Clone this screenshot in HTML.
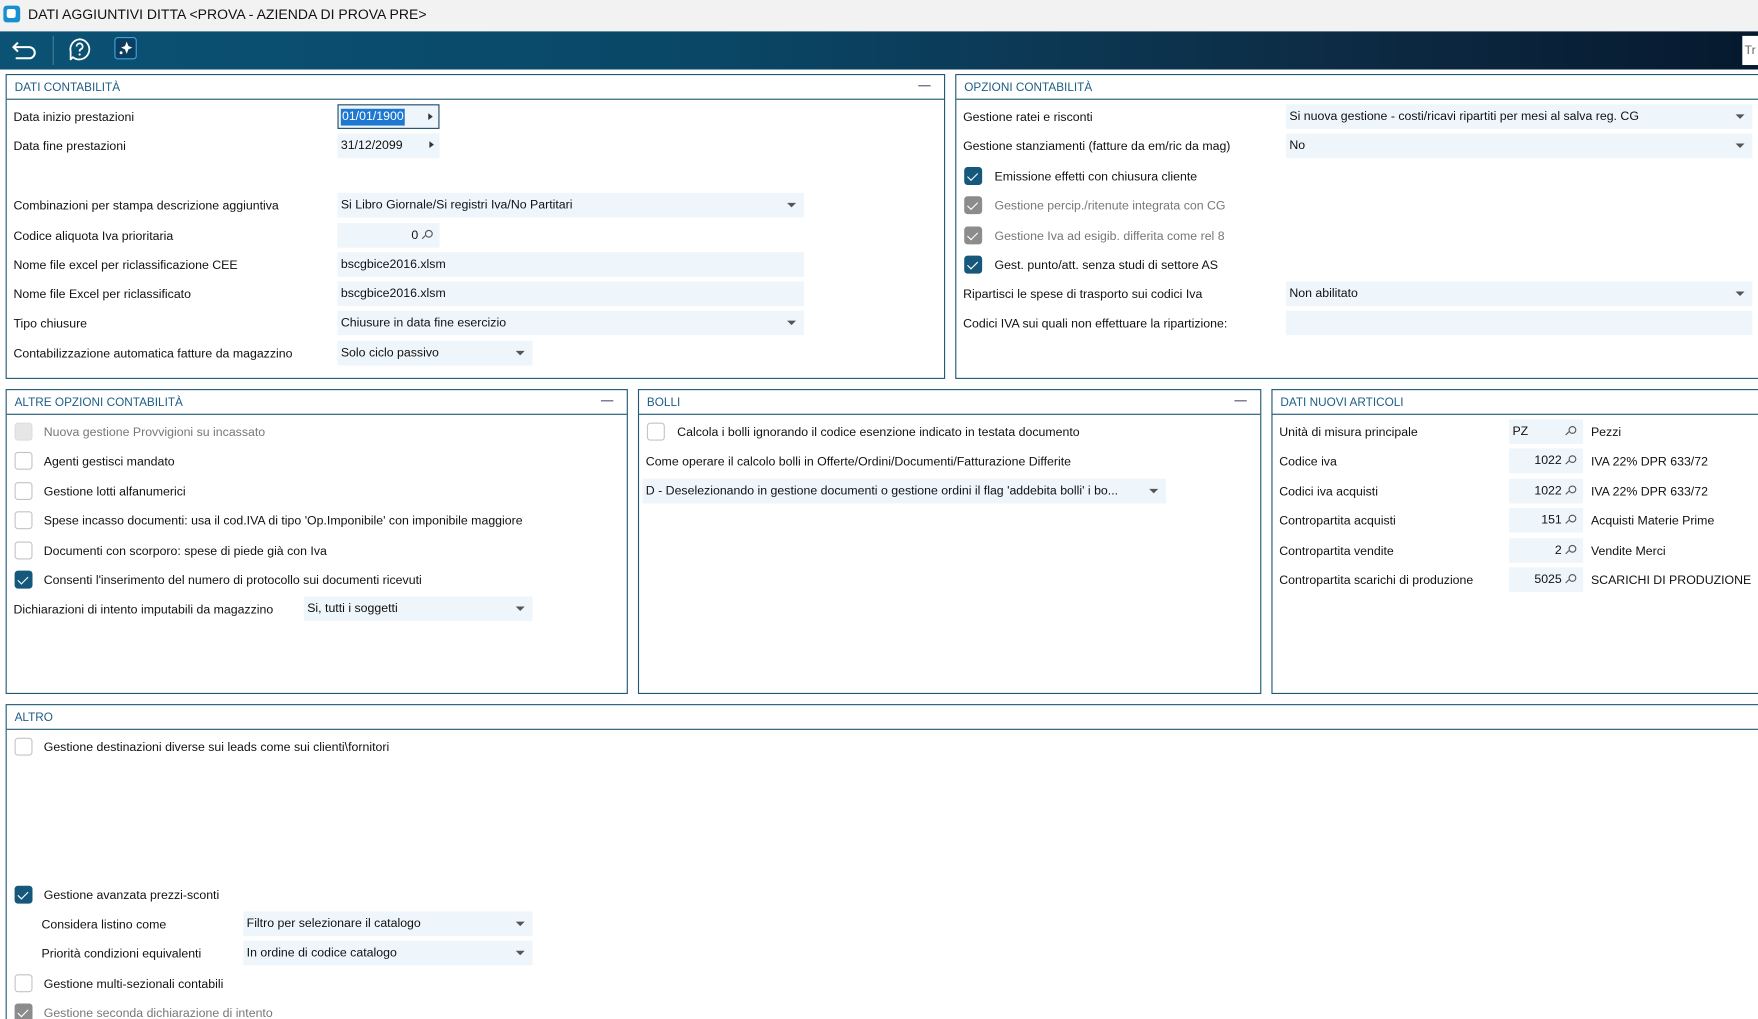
<!DOCTYPE html>
<html><head><meta charset="utf-8"><style>
*{box-sizing:border-box;margin:0;padding:0}
html,body{width:1758px;height:1019px;overflow:hidden;background:#fff}
#w{position:absolute;left:0;top:0;width:1568px;height:909px;overflow:hidden;transform:scale(1.12117);transform-origin:0 0;font-family:"Liberation Sans","DejaVu Sans",sans-serif;font-size:11px;color:#111}
#w div,#w span{position:absolute}
.tb{left:0;top:0;width:1568px;height:28px;background:#f2f2f2}
.bar{left:0;top:28px;width:1568px;height:34px;background:linear-gradient(90deg,#0b5274 0%,#0a4767 40%,#0d2c45 75%,#06192e 100%)}
.p{border:1px solid #1f5873;background:#fff}
.ph{left:0;top:0;right:0;height:22px;border-bottom:1px solid #1f5873}
.pt{left:7px;top:5px;color:#1d5d85;font-size:10.5px}
.mn{right:12px;top:9px;width:11px;height:1px;background:#557}
.l{white-space:nowrap;line-height:16px;margin-top:1px}
.g{color:#777}
.f{height:22px;background:#eef6fc;line-height:22px;padding-left:3px;white-space:nowrap;overflow:hidden}
.dd::after{content:"";position:absolute;right:7px;top:9px;border-left:4px solid transparent;border-right:4px solid transparent;border-top:4px solid #555}
.ar::after{content:"";position:absolute;right:5px;top:7px;border-top:3.5px solid transparent;border-bottom:3.5px solid transparent;border-left:4px solid #333}
.cb{width:16px;height:16px;border:1px solid #c4c4c4;border-radius:3px;background:#fff}
.on{background:#15587c;border-color:#15587c}
.dis{background:#8c8c8c;border-color:#8c8c8c}
.on::after,.dis::after{content:"";position:absolute;left:4px;top:2px;width:4px;height:8px;border:solid #fff;border-width:0 1.6px 1.6px 0;transform:rotate(45deg)}
.dl{background:#e6e6e6;border-color:#ddd}
.mg{position:absolute;right:6px;top:6px;width:7px;height:7px;border:1.3px solid #555;border-radius:50%}
.mg::after{content:"";position:absolute;left:-4px;top:5px;width:4px;height:1.3px;background:#555;transform:rotate(-45deg)}
</style></head><body><div id="w">
<div class="tb"><div style="left:3px;top:5px;width:15px;height:15px;background:#1a8fd0;border-radius:3px"><div style="left:3px;top:3px;width:8px;height:8px;background:#fff;border-radius:2px"></div></div><div class="l" style="left:25px;top:4px;font-size:12.5px">DATI AGGIUNTIVI DITTA &lt;PROVA - AZIENDA DI PROVA PRE&gt;</div></div>
<div class="bar">
<svg style="position:absolute;left:10px;top:7px" width="26" height="20" viewBox="0 0 26 20"><path d="M6 3 L2 7 L6 11 M2 7 H16 a5 5 0 0 1 0 10 H4" fill="none" stroke="#fff" stroke-width="1.8"/></svg>
<div style="left:47px;top:4px;width:1px;height:26px;background:#4a7c96"></div>
<svg style="position:absolute;left:60px;top:5px" width="22" height="22" viewBox="0 0 22 22"><path d="M11 2 A9 9 0 1 1 5 18 L3 20 L3 13 A9 9 0 0 1 11 2Z" fill="none" stroke="#fff" stroke-width="1.6" stroke-linejoin="round"/><path d="M8.3 8.5 a2.7 2.7 0 1 1 3.8 2.4 c-0.9 0.4 -1.1 1 -1.1 2" fill="none" stroke="#fff" stroke-width="1.6"/><circle cx="11" cy="15.6" r="1" fill="#fff"/></svg>
<div style="left:102px;top:5px;width:20px;height:20px;border:1.5px solid #3fa4e0;border-radius:3px;background:#0b3e60"><svg style="position:absolute;left:2px;top:2px" width="14" height="14" viewBox="0 0 14 14"><path d="M8 1 L9.5 5 L13 6.5 L9.5 8 L8 12 L6.5 8 L3 6.5 L6.5 5Z" fill="#fff"/><circle cx="3" cy="11" r="1.3" fill="#fff"/></svg></div>
<div style="left:1554px;top:4px;width:20px;height:26px;background:#fff;color:#666;font-size:11px;line-height:26px;padding-left:2px">Tr</div>
</div>

<div class="p" style="left:5px;top:66px;width:838px;height:272px">
<div class="ph"><div class="pt">DATI CONTABILITÀ</div><div class="mn"></div></div>
<div class="l" style="left:6px;top:29px">Data inizio prestazioni</div>
<div class="f ar" style="left:295px;top:26px;width:91px;border:1px solid #1f4a66;background:#eef6fc"><span style="left:2px;top:3px;height:15px;line-height:15px;background:#1e78d0;color:#fff;padding:0 1px;position:absolute">01/01/1900</span></div>
<div class="l" style="left:6px;top:55px">Data fine prestazioni</div>
<div class="f ar" style="left:295px;top:52px;width:91px">31/12/2099</div>
<div class="l" style="left:6px;top:108px">Combinazioni per stampa descrizione aggiuntiva</div>
<div class="f dd" style="left:295px;top:105px;width:416px">Si Libro Giornale/Si registri Iva/No Partitari</div>
<div class="l" style="left:6px;top:135px">Codice aliquota Iva prioritaria</div>
<div class="f" style="left:295px;top:132px;width:91px"><span style="right:19px;top:0">0</span><i class="mg"></i></div>
<div class="l" style="left:6px;top:161px">Nome file excel per riclassificazione CEE</div>
<div class="f" style="left:295px;top:158px;width:416px">bscgbice2016.xlsm</div>
<div class="l" style="left:6px;top:187px">Nome file Excel per riclassificato</div>
<div class="f" style="left:295px;top:184px;width:416px">bscgbice2016.xlsm</div>
<div class="l" style="left:6px;top:213px">Tipo chiusure</div>
<div class="f dd" style="left:295px;top:210px;width:416px">Chiusure in data fine esercizio</div>
<div class="l" style="left:6px;top:240px">Contabilizzazione automatica fatture da magazzino</div>
<div class="f dd" style="left:295px;top:237px;width:174px">Solo ciclo passivo</div>
</div>

<div class="p" style="left:852px;top:66px;width:730px;height:272px">
<div class="ph"><div class="pt">OPZIONI CONTABILITÀ</div></div>
<div class="l" style="left:6px;top:29px">Gestione ratei e risconti</div>
<div class="f dd" style="left:294px;top:26px;width:416px">Si nuova gestione - costi/ricavi ripartiti per mesi al salva reg. CG</div>
<div class="l" style="left:6px;top:55px">Gestione stanziamenti (fatture da em/ric da mag)</div>
<div class="f dd" style="left:294px;top:52px;width:416px">No</div>
<div class="cb on" style="left:7px;top:82px"></div><div class="l" style="left:34px;top:82px">Emissione effetti con chiusura cliente</div>
<div class="cb dis" style="left:7px;top:108px"></div><div class="l g" style="left:34px;top:108px">Gestione percip./ritenute integrata con CG</div>
<div class="cb dis" style="left:7px;top:135px"></div><div class="l g" style="left:34px;top:135px">Gestione Iva ad esigib. differita come rel 8</div>
<div class="cb on" style="left:7px;top:161px"></div><div class="l" style="left:34px;top:161px">Gest. punto/att. senza studi di settore AS</div>
<div class="l" style="left:6px;top:187px">Ripartisci le spese di trasporto sui codici Iva</div>
<div class="f dd" style="left:294px;top:184px;width:416px">Non abilitato</div>
<div class="l" style="left:6px;top:213px">Codici IVA sui quali non effettuare la ripartizione:</div>
<div class="f" style="left:294px;top:210px;width:416px"></div>
</div>

<div class="p" style="left:5px;top:347px;width:555px;height:272px">
<div class="ph"><div class="pt">ALTRE OPZIONI CONTABILITÀ</div><div class="mn"></div></div>
<div class="cb dl" style="left:7px;top:29px"></div><div class="l g" style="left:33px;top:29px">Nuova gestione Provvigioni su incassato</div>
<div class="cb" style="left:7px;top:55px"></div><div class="l" style="left:33px;top:55px">Agenti gestisci mandato</div>
<div class="cb" style="left:7px;top:82px"></div><div class="l" style="left:33px;top:82px">Gestione lotti alfanumerici</div>
<div class="cb" style="left:7px;top:108px"></div><div class="l" style="left:33px;top:108px;width:436px;overflow:hidden">Spese incasso documenti: usa il cod.IVA di tipo 'Op.Imponibile' con imponibile maggiore</div>
<div class="cb" style="left:7px;top:135px"></div><div class="l" style="left:33px;top:135px">Documenti con scorporo: spese di piede già con Iva</div>
<div class="cb on" style="left:7px;top:161px"></div><div class="l" style="left:33px;top:161px">Consenti l'inserimento del numero di protocollo sui documenti ricevuti</div>
<div class="l" style="left:6px;top:187px">Dichiarazioni di intento imputabili da magazzino</div>
<div class="f dd" style="left:265px;top:184px;width:204px">Si, tutti i soggetti</div>
</div>

<div class="p" style="left:569px;top:347px;width:556px;height:272px">
<div class="ph"><div class="pt">BOLLI</div><div class="mn"></div></div>
<div class="cb" style="left:7px;top:29px"></div><div class="l" style="left:34px;top:29px">Calcola i bolli ignorando il codice esenzione indicato in testata documento</div>
<div class="l" style="left:6px;top:55px">Come operare il calcolo bolli in Offerte/Ordini/Documenti/Fatturazione Differite</div>
<div class="f dd" style="left:3px;top:79px;width:467px;padding-right:20px">D - Deselezionando in gestione documenti o gestione ordini il flag 'addebita bolli' i bo...</div>
</div>

<div class="p" style="left:1134px;top:347px;width:450px;height:272px">
<div class="ph"><div class="pt">DATI NUOVI ARTICOLI</div></div>
<div class="l" style="left:6px;top:29px">Unità di misura principale</div>
<div class="f" style="left:211px;top:26px;width:66px">PZ<i class="mg"></i></div><div class="l" style="left:284px;top:29px">Pezzi</div>
<div class="l" style="left:6px;top:55px">Codice iva</div>
<div class="f" style="left:211px;top:52px;width:66px"><span style="right:19px;top:0">1022</span><i class="mg"></i></div><div class="l" style="left:284px;top:55px">IVA 22% DPR 633/72</div>
<div class="l" style="left:6px;top:82px">Codici iva acquisti</div>
<div class="f" style="left:211px;top:79px;width:66px"><span style="right:19px;top:0">1022</span><i class="mg"></i></div><div class="l" style="left:284px;top:82px">IVA 22% DPR 633/72</div>
<div class="l" style="left:6px;top:108px">Contropartita acquisti</div>
<div class="f" style="left:211px;top:105px;width:66px"><span style="right:19px;top:0">151</span><i class="mg"></i></div><div class="l" style="left:284px;top:108px">Acquisti Materie Prime</div>
<div class="l" style="left:6px;top:135px">Contropartita vendite</div>
<div class="f" style="left:211px;top:132px;width:66px"><span style="right:19px;top:0">2</span><i class="mg"></i></div><div class="l" style="left:284px;top:135px">Vendite Merci</div>
<div class="l" style="left:6px;top:161px">Contropartita scarichi di produzione</div>
<div class="f" style="left:211px;top:158px;width:66px"><span style="right:19px;top:0">5025</span><i class="mg"></i></div><div class="l" style="left:284px;top:161px">SCARICHI DI PRODUZIONE</div>
</div>

<div class="p" style="left:5px;top:628px;width:1580px;height:300px">
<div class="ph"><div class="pt">ALTRO</div></div>
<div class="cb" style="left:7px;top:29px"></div><div class="l" style="left:33px;top:29px">Gestione destinazioni diverse sui leads come sui clienti\fornitori</div>
<div class="cb on" style="left:7px;top:161px"></div><div class="l" style="left:33px;top:161px">Gestione avanzata prezzi-sconti</div>
<div class="l" style="left:31px;top:187px">Considera listino come</div>
<div class="f dd" style="left:211px;top:184px;width:258px">Filtro per selezionare il catalogo</div>
<div class="l" style="left:31px;top:213px">Priorità condizioni equivalenti</div>
<div class="f dd" style="left:211px;top:210px;width:258px">In ordine di codice catalogo</div>
<div class="cb" style="left:7px;top:240px"></div><div class="l" style="left:33px;top:240px">Gestione multi-sezionali contabili</div>
<div class="cb dis" style="left:7px;top:266px"></div><div class="l g" style="left:33px;top:266px">Gestione seconda dichiarazione di intento</div>
</div>
</div></body></html>
